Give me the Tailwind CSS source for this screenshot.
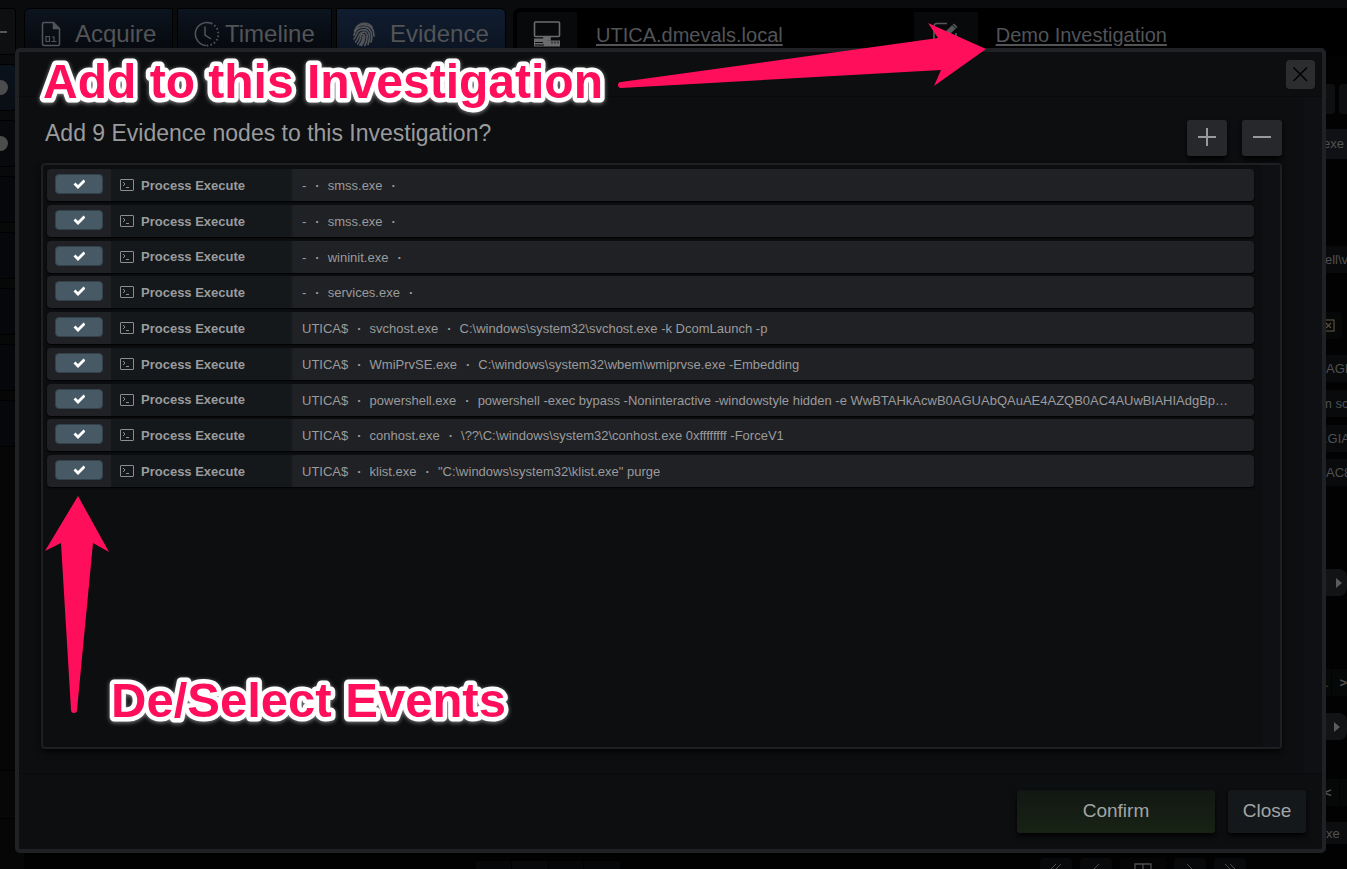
<!DOCTYPE html>
<html lang="en">
<head>
<meta charset="utf-8">
<meta name="viewport" content="width=device-width, initial-scale=1">
<title>Add Evidence to Investigation</title>
<script src="https://cdn.jsdelivr.net/npm/@tailwindcss/browser@4"></script>
</head>
<body class="bg-black font-['Liberation_Sans',Arial,sans-serif] text-[#9a9b9d]">
<div class="relative h-screen min-h-[560px] overflow-hidden">

  <!-- Dimmed application behind the dialog -->
  <div class="flex h-full bg-[#020202]" aria-hidden="true">
    <nav class="flex w-6 shrink-0 flex-col gap-[9px] bg-gradient-to-b from-[#0a0b0d] via-[#050605] to-[#060606] pt-2 pr-2">
      <div class="flex h-[47px] items-center rounded-r border border-l-0 border-black bg-[#0e0f10]"><span class="h-0.5 w-[7px] bg-[#55575a]"></span></div>
      <div class="flex h-[47px] items-center rounded-r border border-l-0 border-black bg-gradient-to-b from-[#0a121c] to-[#0a0e15]"><span class="h-[15px] w-2 rounded-r-full bg-[#4c4c4c]"></span></div>
      <div class="flex h-[47px] items-center rounded-r border border-l-0 border-black bg-[#08090c]"><span class="h-[15px] w-2 rounded-r-full bg-[#4c4c4c]"></span></div>
      <div class="h-[47px] rounded-r border border-l-0 border-black bg-[#06070b]"></div>
      <div class="h-[47px] rounded-r border border-l-0 border-black bg-[#06070b]"></div>
      <div class="h-[47px] rounded-r border border-l-0 border-black bg-[#06070b]"></div>
      <div class="h-[47px] rounded-r border border-l-0 border-black bg-[#06070b]"></div>
      <div class="h-[47px] rounded-r border border-l-0 border-black bg-[#06070b]"></div>
      <div class="mt-auto mb-[50px] h-[49px] border-y border-black bg-[#060706]"></div>
    </nav>
    <div class="flex min-w-0 flex-1 flex-col">
      <header class="flex h-14 shrink-0 bg-[#0a0b0d] pt-2 text-[#525458]">
        <div class="flex gap-1">
          <a href="#" class="flex w-[149px] items-center rounded-tl-md border border-black bg-gradient-to-b from-[#0c141f] to-[#06080c] pt-1 pl-4 text-2xl">
            <svg class="h-[26px] w-5 shrink-0" viewBox="0 0 20 26" fill="none" stroke="currentColor" stroke-width="1.500"><path d="M1.500 3Q1.500 1.500 3 1.500H12.500L18.500 7.500V23Q18.500 24.500 17 24.500H3Q1.500 24.500 1.500 23Z"/><path d="M12.500 2V7.500H18" fill="currentColor"/><path d="M5 15.500h3.500v5h-3.500zM11 16h2v4.500M10.500 20.500h5" stroke-width="1.200"/></svg>
            <span class="ml-3.5">Acquire</span>
          </a>
          <a href="#" class="flex w-[155px] items-center border border-black bg-gradient-to-b from-[#0c141f] to-[#06080c] pt-1 pl-[15px] text-2xl">
            <svg class="h-[26px] w-[26px] shrink-0" viewBox="0 0 26 26" fill="none" stroke="currentColor" stroke-width="1.500"><path d="M18 2.300A11.500 11.500 0 1 0 13 24.500"/><path d="M18 2.300A11.500 11.500 0 0 1 13 24.500" stroke-dasharray="1.500 2.300" stroke-width="2"/><path d="M12 5.500V14l6 4"/></svg>
            <span class="ml-1.5">Timeline</span>
          </a>
          <a href="#" class="flex w-[170px] items-center rounded-tr-md border border-black bg-gradient-to-b from-[#101d30] to-[#0b1320] pt-1 pl-[15px] text-2xl">
            <svg class="h-[26px] w-6 shrink-0" viewBox="0 0 24 26" fill="none" stroke="currentColor" stroke-width="1.700" stroke-linecap="round"><path d="M4.500 6C8 1.500 16 .5 20 6M2.500 10C5 4 10 3.500 13 3.800 19 4.500 22 9 22 15M1.800 14C4 7 9 5.800 12.500 6.200 17.500 7 19.800 11 19.800 15.500Q19.800 18.500 19 21M2 18C5 15 3.800 9 11.500 8.600 15.500 8.600 17.500 12 17.500 15.500 17.500 19 17 21 16 23.500M3.500 21C7.500 17 5.800 11.200 11.300 11 14 11 15.200 13.500 15.200 16 15 20 14 22.500 12.800 24.500M5.500 23C9 19.500 8.500 15 9 14.200 10 12.500 12.800 13 12.800 16 12.500 20 11 22.500 9.500 24.500M11 15.500C11 19 10 21.500 7.800 24"/></svg>
            <span class="ml-3.5">Evidence</span>
          </a>
        </div>
        <div class="ml-[7px] flex flex-1 rounded-tl-lg bg-black pt-1 pl-1 text-xl">
          <div class="flex w-[60px] justify-center rounded-tl bg-[#08090a] pt-[9px] text-[#6a6c6e]">
            <svg class="h-7 w-7" viewBox="0 0 28 28" fill="none" stroke="currentColor" stroke-width="1.600"><rect x="1.500" y="1" width="25" height="14.500" rx="1"/><path d="M11 16v3h6v-3z" fill="currentColor"/><path d="M1 17.500h10l3 2h13v6H1z" fill="currentColor" stroke="none"/><path d="M2 21.500h8M2 24h9M19 20.500v2M22 20.500v2M25 20.500v2" stroke="#08090a" stroke-width="1"/></svg>
          </div>
          <a href="#" class="ml-[19px] pt-[9px] underline decoration-2 underline-offset-2">UTICA.dmevals.local</a>
          <div class="ml-[131px] flex w-16 justify-center bg-[#08090a] pt-[9px] text-[#55585b]">
            <svg class="h-7 w-7" viewBox="0 0 28 28" fill="none" stroke="currentColor" stroke-width="1.700"><path d="M15 2.500H5Q2 2.500 2 5.500V22Q2 25 5 25H21Q24 25 24 22V12"/><path d="M12 15l2-5 8-7.500 3.500 3.500-8 7.500z" fill="currentColor" stroke="none"/><path d="M20 3.500l4 4" stroke="#08090a" stroke-width="1"/></svg>
          </div>
          <a href="#" class="ml-[18px] pt-[9px] underline decoration-2 underline-offset-2">Demo Investigation</a>
        </div>
      </header>
      <div class="flex min-h-0 flex-1 justify-end overflow-hidden">
        <div class="flex w-[47px] flex-col overflow-hidden pt-7 text-[13px] leading-[27px] whitespace-nowrap text-[#505153]">
          <div class="flex h-[30px] shrink-0 gap-1"><span class="w-[35px] rounded-r bg-[#0e0f10]"></span><span class="w-2 rounded-l bg-[#0e0f10]"></span></div>
          <div class="mt-[15px] h-[30px] shrink-0 bg-[#101114] pt-px pl-[23px]">exe</div>
          <div class="mt-[87px] h-[27px] shrink-0 bg-[#090a0b] pl-[25px]">ell\v</div>
          <div class="mt-[39px] flex h-[27px] w-[42px] shrink-0 items-center rounded-r bg-[#060707] pl-[22px]">
            <svg class="h-[13px] w-[13px]" viewBox="0 0 13 13" fill="none" stroke="#5b4f3c" stroke-width="1.200"><rect x="1" y="1" width="11" height="11"/><path d="M4 4l5 5M9 4l-5 5"/></svg>
          </div>
          <div class="mt-4 h-[27px] shrink-0 bg-[#090a0b] pl-[26px]">AGI</div>
          <div class="mt-2 h-[27px] shrink-0 bg-[#090a0b] pl-[21px]">m sc</div>
          <div class="mt-2 h-[27px] shrink-0 bg-[#090a0b] pl-[24px]">.GIA</div>
          <div class="mt-[7px] h-[27px] shrink-0 bg-[#090a0b] pl-[26px]">AC8</div>
          <div class="mt-[83px] flex h-[27px] shrink-0 items-center rounded-r-lg bg-[#121315] pl-9"><span class="h-0 w-0 border-y-[5px] border-l-[6px] border-y-transparent border-l-[#5a5b5d]"></span></div>
          <div class="mt-[73px] flex h-[27px] shrink-0 gap-px"><span class="w-[35px] bg-[#060707] pl-[25px] text-[#6b4b1e]">.</span><span class="flex-1 bg-[#060707] pl-[7px] font-bold">&gt;</span></div>
          <div class="mt-[17px] flex h-[27px] shrink-0 items-center rounded-r-lg bg-[#121315] pl-[34px]"><span class="h-0 w-0 border-y-[5px] border-l-[6px] border-y-transparent border-l-[#5a5b5d]"></span></div>
          <div class="mt-[39px] flex h-[27px] shrink-0 gap-px"><span class="w-[39px] bg-[#060707] pl-[24px] font-bold">&lt;</span><span class="flex-1 bg-[#060707]"></span></div>
          <div class="mt-4 h-[22px] shrink-0 bg-[#0c0d0e] pl-[26px] leading-6">xe</div>
        </div>
      </div>
      <footer class="flex h-[11px] shrink-0 items-start justify-between overflow-hidden pr-[101px] pl-[452px] text-[#4c4e51]">
        <div class="mt-[3px] flex h-2 gap-px"><span class="w-[35px] bg-[#060708]"></span><span class="w-9 bg-[#08090b]"></span><span class="w-[34px] bg-[#060708]"></span><span class="w-9 bg-[#060708]"></span></div>
        <div class="flex gap-2">
          <span class="flex w-8 justify-center rounded-t bg-[#08090a] pt-1.5"><svg class="h-3 w-4" viewBox="0 0 16 12" fill="none" stroke="currentColor"><path d="M8 0L2 6l6 6M13 0L7 6l6 6"/></svg></span>
          <span class="flex w-8 justify-center rounded-t bg-[#08090a] pt-1.5"><svg class="h-3 w-4" viewBox="0 0 16 12" fill="none" stroke="currentColor"><path d="M11 0L5 6l6 6"/></svg></span>
          <span class="flex w-[46px] justify-center rounded-t bg-[#050505] pt-[5px]"><svg class="h-3 w-[18px]" viewBox="0 0 18 12" fill="none" stroke="currentColor" stroke-width="1.300"><path d="M1 12V1h16v11M9 1v11"/></svg></span>
          <span class="flex w-8 justify-center rounded-t bg-[#08090a] pt-1.5"><svg class="h-3 w-4" viewBox="0 0 16 12" fill="none" stroke="currentColor"><path d="M5 0l6 6-6 6"/></svg></span>
          <span class="flex w-8 justify-center rounded-t bg-[#08090a] pt-1.5"><svg class="h-3 w-4" viewBox="0 0 16 12" fill="none" stroke="currentColor"><path d="M3 0l6 6-6 6M8 0l6 6-6 6"/></svg></span>
        </div>
      </footer>
    </div>
  </div>

  <!-- Dialog -->
  <div class="absolute inset-0 flex pt-12 pr-[21px] pb-4 pl-[15px]">
    <section role="dialog" aria-labelledby="dialog-title" class="flex min-w-0 flex-1 flex-col rounded-[5px] border-4 border-[#202124] bg-[#0d0e10]">
      <div class="flex h-[45px] shrink-0 items-start justify-end border-b border-[#090a0b] pt-2 pr-[7px]">
        <button type="button" aria-label="Close dialog" class="flex h-[29px] w-[29px] items-center justify-center rounded bg-[#2c2d2f] text-black">
          <svg class="h-[15px] w-[15px]" viewBox="0 0 15 15" fill="none" stroke="currentColor" stroke-width="1.500"><path d="M.5 .5l13.500 13.500M14 .5l-13.500 13.500"/></svg>
        </button>
      </div>
      <div class="flex min-h-0 flex-1">
        <div class="flex min-w-0 flex-1 flex-col pt-[23px] pr-[22px] pb-6 pl-[22px]">
          <div class="flex items-start justify-between pl-1">
            <h1 id="dialog-title" class="text-[23px] leading-[26px]">Add 9 Evidence nodes to this Investigation?</h1>
            <div class="flex gap-[15px]">
              <button type="button" aria-label="Select all" class="flex h-9 w-10 items-center justify-center rounded-[3px] bg-[#26282c] shadow-md shadow-black">
                <svg class="h-5 w-5" viewBox="0 0 20 20" fill="none" stroke="#97999d" stroke-width="2"><path d="M1 9h18M10 0v18"/></svg>
              </button>
              <button type="button" aria-label="Deselect all" class="flex h-9 w-10 items-center justify-center rounded-[3px] bg-[#26282c] shadow-md shadow-black">
                <svg class="h-5 w-5" viewBox="0 0 20 20" fill="none" stroke="#97999d" stroke-width="2"><path d="M1 9h18"/></svg>
              </button>
            </div>
          </div>
          <div class="mt-[7px] flex min-h-0 flex-1 rounded border-2 border-[#1e1f22] shadow-md shadow-black/60">
            <ul id="events" class="flex h-[326px] min-w-0 flex-1 flex-col justify-between py-1 pr-2 pl-1 text-[13px]"></ul>
            <div class="w-[18px] bg-[#0f1013]"></div>
          </div>
        </div>
        <div class="w-[18px] bg-[#0f1013]"></div>
      </div>
      <div class="flex h-[76px] shrink-0 justify-end gap-[13px] border-t border-[#090a0b] pt-4 pr-4 text-[19px] text-[#a3a4a5]">
        <button type="button" class="h-[43px] w-[198px] rounded-[3px] bg-gradient-to-b from-[#121713] to-[#172314] pb-px shadow-md shadow-black/80">Confirm</button>
        <button type="button" class="h-[43px] w-[78px] rounded-[3px] bg-[#14181b] pb-px shadow-md shadow-black/80">Close</button>
      </div>
    </section>
  </div>

  <!-- Annotations -->
  <svg class="pointer-events-none absolute top-[50px] left-9 h-16 w-[580px] font-bold drop-shadow-[0_1px_2px_rgba(255,255,255,0.5)]" fill="#ff0f5b" stroke="#fff" stroke-width="9" stroke-linejoin="round" paint-order="stroke"><text x="7" y="48" font-size="48">Add to this Investigation</text></svg>
  <svg class="pointer-events-none absolute top-[669px] left-[104px] h-16 w-[420px] font-bold drop-shadow-[0_1px_2px_rgba(255,255,255,0.5)]" fill="#ff0f5b" stroke="#fff" stroke-width="9" stroke-linejoin="round" paint-order="stroke"><text x="7" y="48" font-size="49">De/Select Events</text></svg>
  <svg class="pointer-events-none absolute top-5 left-[610px] h-[70px] w-[380px]" viewBox="610 20 380 70" fill="#ff0f5b"><path d="M621 82L938 38 928 23 986 49 934 86 941 70 621 88A3 3 0 0 1 621 82Z"/></svg>
  <svg class="pointer-events-none absolute top-[490px] left-10 h-[230px] w-[74px]" viewBox="40 490 74 230" fill="#ff0f5b"><path d="M78 496L109 552 93 543 77 710A3 3 0 0 1 71 710L61 543 45 551Z"/></svg>
</div>

<script>
  const events = [
    ['-', 'smss.exe', ''],
    ['-', 'smss.exe', ''],
    ['-', 'wininit.exe', ''],
    ['-', 'services.exe', ''],
    ['UTICA$', 'svchost.exe', 'C:\\windows\\system32\\svchost.exe -k DcomLaunch -p'],
    ['UTICA$', 'WmiPrvSE.exe', 'C:\\windows\\system32\\wbem\\wmiprvse.exe -Embedding'],
    ['UTICA$', 'powershell.exe', 'powershell -exec bypass -Noninteractive -windowstyle hidden -e WwBTAHkAcwB0AGUAbQAuAE4AZQB0AC4AUwBlAHIAdgBpAGMAZQBQAG8AaQBuAHQA'],
    ['UTICA$', 'conhost.exe', '\\??\\C:\\windows\\system32\\conhost.exe 0xffffffff -ForceV1'],
    ['UTICA$', 'klist.exe', '"C:\\windows\\system32\\klist.exe" purge'],
  ];
  const dot = '<span class="mr-2 ml-[9px] font-bold">·</span>';
  document.getElementById('events').innerHTML = events.map(([user, exe, cmd], i) => `
    <li class="flex h-8 overflow-hidden rounded bg-[#202124] shadow-[0_1px_2px_#000]">
      <div class="w-16 shrink-0 pt-[5px] pl-2">
        <div class="grid h-5 w-12">
          <input type="checkbox" checked id="event-${i}" class="peer col-start-1 row-start-1 h-5 w-12 appearance-none rounded border border-[#33414a] bg-[#202124] checked:bg-[#465965]">
          <svg class="pointer-events-none invisible col-start-1 row-start-1 h-3 w-3 place-self-center peer-checked:visible" viewBox="0 0 12 12" fill="none" stroke="#fff" stroke-width="2.800"><path d="M1.500 5.500l3.500 3.500L11.500 2.500"/></svg>
        </div>
      </div>
      <label for="event-${i}" class="flex w-[182px] shrink-0 items-center border-r-2 border-[#1a1d20] bg-[#14181b] pl-[9px] font-bold">
        <svg class="mr-[7px] h-3 w-3.5" viewBox="0 0 14 12" fill="none" stroke="#8b8d8f" stroke-width="1"><rect x=".5" y=".5" width="13" height="11" rx=".5"/><path d="M3 3l2 2-2 2M6 8.500h3"/></svg>
        <span class="pt-px">Process Execute</span>
      </label>
      <p class="mr-6 min-w-0 flex-1 truncate pl-[9px] leading-[33px]">${user}${dot}${exe}${dot}${cmd}</p>
    </li>`).join('');
</script>
</body>
</html>
